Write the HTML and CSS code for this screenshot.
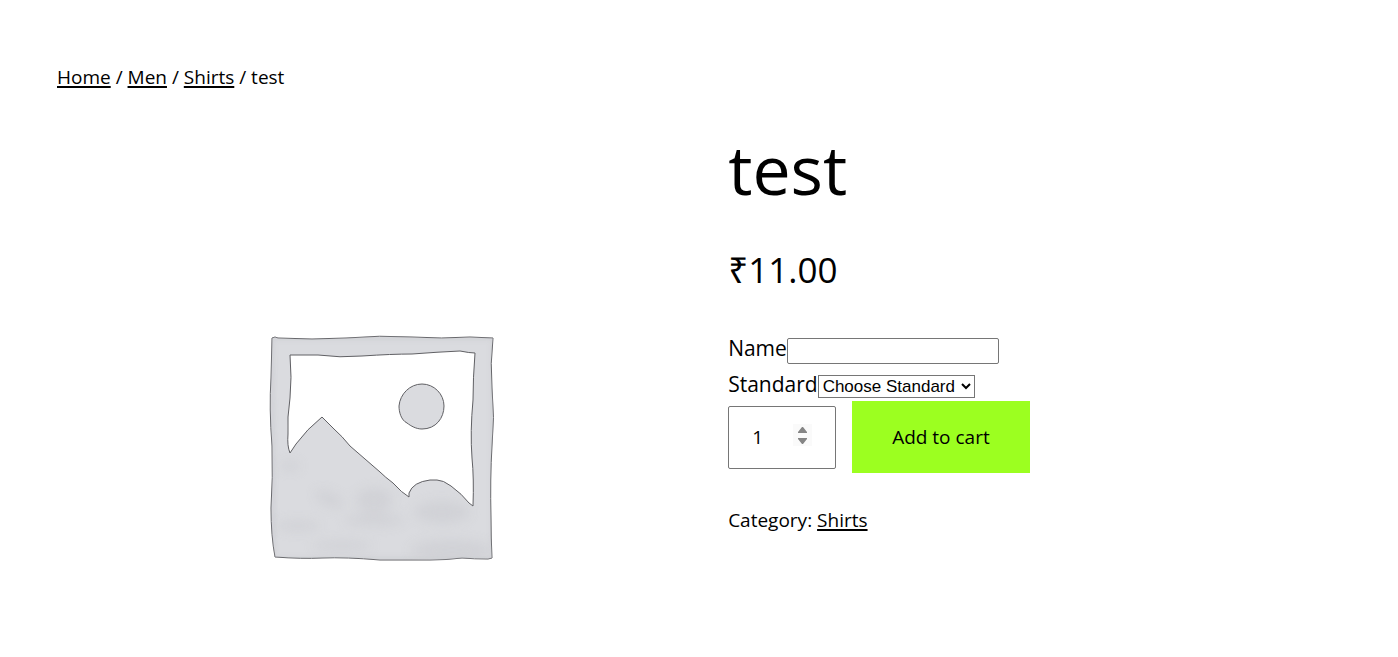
FILE: index.html
```html
<!DOCTYPE html>
<html lang="en">
<head>
<meta charset="utf-8">
<meta name="viewport" content="width=device-width, initial-scale=1">
<title>test</title>
<link rel="stylesheet" href="styles.css">
</head>
<body>
<nav class="breadcrumb" aria-label="Breadcrumb"><a href="#">Home</a> / <a href="#">Men</a> / <a href="#">Shirts</a> / test</nav>
<main class="product">
  <div class="gallery">
    <svg class="placeholder" viewBox="0 0 240 240" role="img" aria-label="Awaiting product image">
      <defs>
        <filter id="soft" x="-50%" y="-50%" width="200%" height="200%"><feGaussianBlur stdDeviation="6"/></filter>
        <filter id="edge" x="-20%" y="-20%" width="140%" height="140%"><feGaussianBlur stdDeviation="2"/></filter>
        <clipPath id="body"><path clip-rule="evenodd" d="M10 10Q13 8 16 10Q50 12 84 10Q118 7 150 9Q180 11 208 9L231 10Q228 36 230 60Q233 90 230 118Q228 150 229 190Q229 210 230 230L226 231Q212 231 200 230Q184 232 168 232L118 232Q84 229 60 230Q40 231 13 229Q9 208 9 180Q11 150 10 118Q7 80 9 50ZM28 27Q42 27 56 27Q78 30 100 28Q130 26 150 26Q176 24 198 23Q208 25 213 25Q211 50 211 72Q208 104 210 130Q212 150 211 178L207 175Q200 165 189 157Q185 152 180 152H169Q152 153 147 165V169Q140 165 131 155L93 121Q82 105 72 99L60 89Q45 101 34 116L28 125Q25 118 26 106Q25 90 28 70Q30 50 28 27Z"/></clipPath>
      </defs>
      <path class="fill" fill-rule="evenodd" d="M10 10Q13 8 16 10Q50 12 84 10Q118 7 150 9Q180 11 208 9L231 10Q228 36 230 60Q233 90 230 118Q228 150 229 190Q229 210 230 230L226 231Q212 231 200 230Q184 232 168 232L118 232Q84 229 60 230Q40 231 13 229Q9 208 9 180Q11 150 10 118Q7 80 9 50ZM28 27Q42 27 56 27Q78 30 100 28Q130 26 150 26Q176 24 198 23Q208 25 213 25Q211 50 211 72Q208 104 210 130Q212 150 211 178L207 175Q200 166 189 158Q181 152 175 152H168Q151 154 147 165V169Q140 165 131 155Q123 149 118 144L88 118Q80 108 72 101L60 89Q45 101 34 116L28 125Q25 118 26 106Q25 90 28 70Q30 50 28 27Z"/>
      <g clip-path="url(#body)">
        <path class="rim" filter="url(#edge)" d="M10 10H231V231H12Z"/>
        <g class="shade" filter="url(#soft)">
          <path d="M52 164Q66 158 82 174L76 182L58 174Z"/>
          <ellipse cx="28" cy="138" rx="10" ry="5"/>
          <ellipse cx="112" cy="172" rx="18" ry="12"/>
          <ellipse cx="112" cy="192" rx="30" ry="6"/>
          <ellipse cx="180" cy="184" rx="28" ry="11"/>
          <ellipse cx="190" cy="222" rx="42" ry="10"/>
          <ellipse cx="36" cy="198" rx="22" ry="5"/>
          <ellipse cx="80" cy="218" rx="30" ry="5"/>
        </g>
      </g>
      <path class="fill" d="M160 56C172 56 182 66 182 78C182 90 174 101 160 101C154 101 149 98 145 95C139 92 137 84 137 78C138 66 148 56 160 56Z"/>
    </svg>
  </div>
  <section class="summary">
    <h1 class="title">test</h1>
    <p class="price">₹11.00</p>
    <form class="cart">
      <div class="field"><label for="name">Name</label><input class="text" id="name" type="text"></div>
      <div class="field"><label for="standard">Standard</label><select class="select" id="standard"><option>Choose Standard</option></select></div>
      <div class="actions">
        <input class="qty" type="number" value="1" min="1" aria-label="Quantity">
        <button class="add" type="button">Add to cart</button>
      </div>
    </form>
    <p class="meta">Category: <a href="#">Shirts</a></p>
  </section>
</main>
</body>
</html>
```
FILE: styles.css
```css
* { box-sizing: border-box; }
body {
  margin: 0;
  padding: 60px 57px 0;
  background: #fff;
  color: #000;
  font-family: "Segoe UI", "Open Sans", "Noto Sans", sans-serif;
  font-size: 19px;
  line-height: 34px;
}
a { color: inherit; text-decoration: underline; text-decoration-thickness: 2px; text-underline-offset: 2px; text-decoration-skip-ink: none; }
.product {
  display: grid;
  grid-template-columns: 17fr 16fr;
  gap: 20px;
  margin-top: 28px;
}
.gallery { display: flex; justify-content: center; align-items: flex-start; padding: 206px 2px 0 0; }
.placeholder { width: 240px; height: 240px; }
.fill { fill: #dadbdf; stroke: #606064; stroke-width: 1; }
.rim { fill: none; stroke: #c6c7cc; stroke-width: 3; opacity: .6; }
.shade { fill: #c4c5ca; opacity: .4; }
.title { margin: 0; font-size: 68px; font-weight: 400; line-height: 94px; }
.price { margin: 29px 0 0; font-size: 35px; line-height: 50px; }
.cart { margin-top: 35px; }
.field { display: flex; align-items: center; height: 36px; font-size: 21px; }
.text { width: 212px; height: 26px; margin-top: 5px; border: 1px solid #767676; border-radius: 2px; background: #fff; font: 17px "Liberation Sans", Arial, sans-serif; }
.select { width: 157px; height: 23px; margin-top: 4px; padding: 0; border: 1px solid #767676; border-radius: 0; background: #fff; color: #000; font: 17px "Liberation Sans", Arial, sans-serif; }
.actions { display: flex; align-items: center; gap: 16px; margin-top: -1px; }
.qty { width: 108px; height: 63px; padding: 0 23px; border: 1px solid #767676; border-radius: 2px; background: #fff; color: #000; font-family: inherit; font-size: 19px; }
.qty::-webkit-inner-spin-button {
  appearance: none;
  width: 19px;
  height: 22px;
  opacity: 1;
  background: #fafafa url("data:image/svg+xml,%3Csvg xmlns='http://www.w3.org/2000/svg' width='19' height='22'%3E%3Cpath fill='%23858585' d='M5 9V8l4-5h1l4 5v1zM5 14h9v1l-4 5H9l-4-5z'/%3E%3C/svg%3E") center no-repeat;
}
.add { height: 72px; padding: 0 40px; border: 0; border-radius: 0; background: #9cff20; color: #000; font-family: inherit; font-size: 19px; }
.meta { margin: 30px 0 0; }
```
